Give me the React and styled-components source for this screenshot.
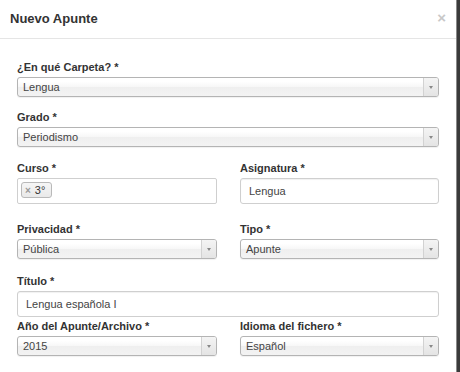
import styled, { createGlobalStyle } from 'styled-components';

const GlobalStyle = createGlobalStyle`
  html, body {
    margin: 0;
    padding: 0;
    background: #3b3b3b;
  }
  body {
    font-family: "Liberation Sans", Arial, Helvetica, sans-serif;
    color: #333;
  }
`;

const Modal = styled.div`
  width: 456px;
  height: 372px;
  overflow: hidden;
  background: #fff;
  border-right: 1px solid #8a8a8a;
`;

const Header = styled.div`
  display: flex;
  align-items: center;
  justify-content: space-between;
  height: 39px;
  padding: 0 10px 1px 10px;
  border-bottom: 1px solid #e5e5e5;
  box-sizing: border-box;

  h4 {
    margin: 0;
    font-size: 13px;
    font-weight: bold;
    line-height: 18px;
    color: #333;
  }
`;

const Close = styled.span`
  font-size: 15px;
  font-weight: bold;
  line-height: 1;
  color: #c8c8c8;
  margin-top: -3px;
`;

const Body = styled.div`
  padding: 20px 17px 0 17px;
`;

const Row = styled.div`
  display: grid;
  grid-template-columns: ${(p) => (p.$cols === 2 ? '200px 199px' : '422px')};
  column-gap: 23px;
  margin-bottom: ${(p) => p.$mb}px;
`;

const Group = styled.div`
  display: flex;
  flex-direction: column;
`;

const Label = styled.label`
  display: block;
  font-size: 11px;
  font-weight: bold;
  line-height: 16px;
  margin-bottom: 2px;
  color: #333;
`;

const SelectBox = styled.div`
  display: flex;
  height: 20px;
  box-sizing: border-box;
  border: 1px solid #b4b4b4;
  border-radius: 3px;
  background: linear-gradient(#ffffff 20%, #f7f7f7 50%, #efefef 52%, #f3f3f3 100%);
  box-shadow: 0 1px 1px rgba(0, 0, 0, 0.06);
  overflow: hidden;
`;

const SelectText = styled.span`
  flex: 1;
  padding-left: 5px;
  font-size: 11px;
  line-height: 18px;
  color: #444;
  white-space: nowrap;
`;

const Arrow = styled.span`
  width: 14px;
  display: flex;
  align-items: center;
  justify-content: center;
  border-left: 1px solid #d2d2d2;
  background: linear-gradient(#f4f4f4, #e4e4e4);

  &::after {
    content: '';
    display: block;
    width: 0;
    height: 0;
    border-left: 2px solid transparent;
    border-right: 2px solid transparent;
    border-top: 3px solid #888;
  }
`;

const Input = styled.div`
  height: 26px;
  box-sizing: border-box;
  border: 1px solid #cfcfcf;
  border-radius: 3px;
  box-shadow: inset 0 1px 1px rgba(0, 0, 0, 0.06);
  padding: 0 8px;
  font-size: 11px;
  line-height: 24px;
  color: #444;
  background: #fff;
`;

const MultiBox = styled.div`
  height: 26px;
  box-sizing: border-box;
  border: 1px solid #cfcfcf;
  border-radius: 2px;
  padding: 3px;
  background: #fff;
  display: flex;
  align-items: flex-start;
`;

const Tag = styled.span`
  display: inline-flex;
  align-items: center;
  height: 16px;
  box-sizing: border-box;
  padding: 0 6px 0 3px;
  border: 1px solid #b9b9b9;
  border-radius: 3px;
  background: linear-gradient(#f6f6f6, #e9e9e9);
  font-size: 11px;
  color: #333;

  b {
    font-size: 10px;
    font-weight: bold;
    color: #999;
    margin-right: 4px;
  }
`;

const Select = ({ value }) => (
  <SelectBox>
    <SelectText>{value}</SelectText>
    <Arrow />
  </SelectBox>
);

const App = () => {
  return (
    <>
      <GlobalStyle />
      <Modal>
        <Header>
          <h4>Nuevo Apunte</h4>
          <Close>×</Close>
        </Header>
        <Body>
          <Row $mb={12}>
            <Group>
              <Label>¿En qué Carpeta? *</Label>
              <Select value="Lengua" />
            </Group>
          </Row>
          <Row $mb={13}>
            <Group>
              <Label>Grado *</Label>
              <Select value="Periodismo" />
            </Group>
          </Row>
          <Row $cols={2} $mb={17}>
            <Group>
              <Label>Curso *</Label>
              <MultiBox>
                <Tag>
                  <b>×</b>3°
                </Tag>
              </MultiBox>
            </Group>
            <Group>
              <Label>Asignatura *</Label>
              <Input>Lengua</Input>
            </Group>
          </Row>
          <Row $cols={2} $mb={14}>
            <Group>
              <Label>Privacidad *</Label>
              <Select value="Pública" />
            </Group>
            <Group>
              <Label>Tipo *</Label>
              <Select value="Apunte" />
            </Group>
          </Row>
          <Row $mb={1}>
            <Group>
              <Label>Título *</Label>
              <Input>Lengua española I</Input>
            </Group>
          </Row>
          <Row $cols={2} $mb={0}>
            <Group>
              <Label>Año del Apunte/Archivo *</Label>
              <Select value="2015" />
            </Group>
            <Group>
              <Label>Idioma del fichero *</Label>
              <Select value="Español" />
            </Group>
          </Row>
        </Body>
      </Modal>
    </>
  );
};

export default App;
